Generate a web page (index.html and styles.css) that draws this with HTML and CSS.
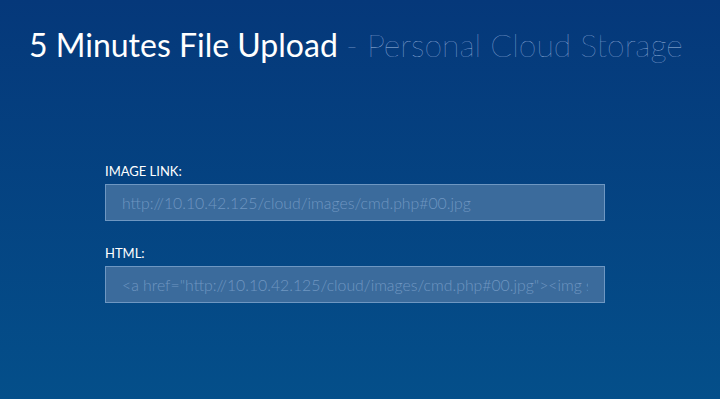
FILE: index.html
```html
<!DOCTYPE html>
<html lang="en">
<head>
  <meta charset="UTF-8">
  <meta name="viewport" content="width=device-width, initial-scale=1.0">
  <title>5 Minutes File Upload</title>
  <link rel="stylesheet" href="styles.css">
</head>
<body>

  <div class="header">
    <h1>5 Minutes File Upload <span class="sub">- Personal Cloud Storage</span></h1>
  </div>

  <div class="links">
    <div class="field">
      <label>IMAGE LINK:</label>
      <input type="text" class="input" value="http://10.10.42.125/cloud/images/cmd.php#00.jpg" readonly>
    </div>
    <div class="field">
      <label>HTML:</label>
      <input type="text" class="input" value='<a href="http://10.10.42.125/cloud/images/cmd.php#00.jpg"><img src="http://10.10.42.125/cloud/images/cmd.php#00.jpg" /></a>' readonly>
    </div>
  </div>

</body>
</html>
```

FILE: styles.css
```css
* { box-sizing: border-box; margin: 0; padding: 0; }
html, body { height: 100%; }
body {
  font-family: Lato, 'Open Sans', sans-serif;
  background: linear-gradient(to bottom, #05387a 0%, #044f8a 100%);
  color: #fff;
  min-height: 100vh;
}
.header {
  padding: 24px 29px 0;
}
.header h1 {
  font-size: 32px;
  font-weight: 400;
  line-height: 42px;
  white-space: nowrap;
}
.header .sub {
  font-weight: 100;
  color: #a3bde0;
}
.links {
  width: 500px;
  margin: 97px 0 0 105px;
}
.field {
  margin-bottom: 24px;
}
.field label {
  display: block;
  font-size: 13px;
  line-height: 16px;
  margin-bottom: 5px;
}
.input {
  display: block;
  width: 100%;
  height: 37px;
  padding: 0 16px;
  background: #3b6b9c;
  border: 1px solid #6e97c2;
  color: #6f96c1;
  font-family: Lato, sans-serif;
  font-weight: 300;
  font-size: 15.8px;
  outline: none;
}
```
